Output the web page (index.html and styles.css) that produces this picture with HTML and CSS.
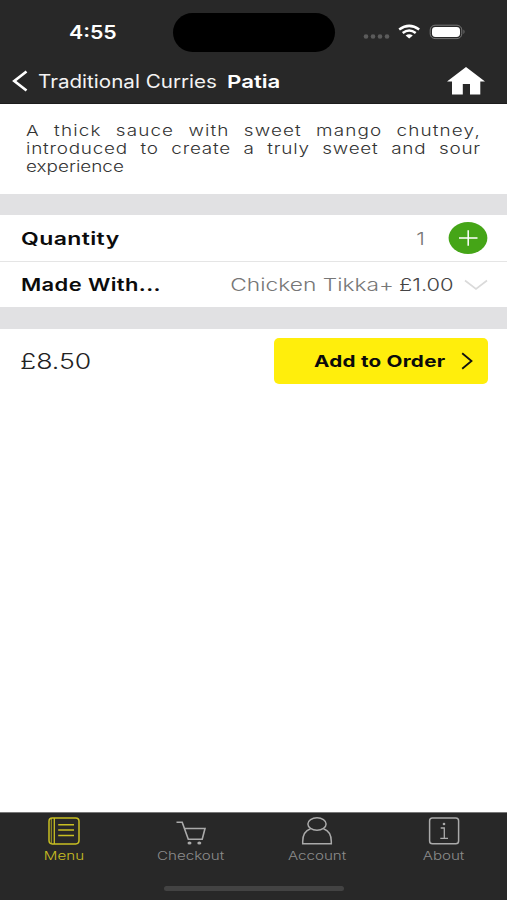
FILE: index.html
```
<!DOCTYPE html>
<html lang="en">
<head>
<meta charset="utf-8">
<title>Patia</title>
<link rel="stylesheet" href="styles.css">
</head>
<body>
<div class="app">
  <header class="top">
    <div class="status">
      <span class="wide time">4:55</span>
      <div class="island"></div>
      <svg class="signal" viewBox="0 0 104 20" width="104" height="20">
        <g fill="#5b5b5b"><circle cx="3" cy="14.5" r="2.3"/><circle cx="10" cy="14.5" r="2.3"/><circle cx="17" cy="14.5" r="2.3"/><circle cx="24" cy="14.5" r="2.3"/></g>
        <g fill="none" stroke="#fff" stroke-width="2.5"><path d="M36.2 7.6Q46.2 .2 56.2 7.6"/><path d="M39.7 11Q46.2 6 52.7 11"/></g>
        <path d="M42.6 13.6Q46.2 10.8 49.8 13.6L46.2 16.5Z" fill="#fff"/>
        <rect x="67.2" y="3.2" width="31.6" height="13.4" rx="4.8" fill="none" stroke="#777"/>
        <rect x="69" y="4.9" width="28" height="10" rx="3.4" fill="#fff"/>
        <path d="M100.5 7.6q2 2.2 0 4.6z" fill="#777"/>
      </svg>
    </div>
    <nav class="titlebar">
      <svg class="back" viewBox="0 0 16 22" width="16" height="22"><path d="M14.5 1.5L2.3 11L14.5 20.5" fill="none" stroke="#fff" stroke-width="2.7"/></svg>
      <span class="wide category">Traditional Curries</span>
      <span class="wide dish">Patia</span>
      <svg class="home" viewBox="0 0 38 28" width="38" height="28"><path d="M19 0L38 14.5H33.3V27.5H23V17H15.8V27.5H5V14.5H0Z" fill="#fff"/></svg>
    </nav>
  </header>
  <main>
    <section class="description">
      <p class="wide copy">
        <span class="line loose">A thick sauce with sweet mango chutney,</span>
        <span class="line spaced">introduced to create a truly sweet and sour</span>
        <span class="line last">experience</span>
      </p>
    </section>
    <section class="options">
      <div class="row">
        <span class="wide label quantity">Quantity</span>
        <span class="wide value count">1</span>
        <svg class="plus" viewBox="0 0 40 32" width="40" height="32"><ellipse cx="20" cy="16" rx="19.4" ry="15.9" fill="#45a517"/><path d="M11 16H29.5M20.2 8.2V23.8" stroke="#fff" stroke-width="1.5"/></svg>
      </div>
      <div class="row">
        <span class="wide label made">Made With...</span>
        <span class="wide value choice">Chicken Tikka+</span>
        <span class="wide value extra">£1.00</span>
        <svg class="down" viewBox="0 0 24 12" width="24" height="12"><path d="M1 1.5L12 10L23 1.5" fill="none" stroke="#dadada" stroke-width="1.6"/></svg>
      </div>
    </section>
    <section class="order">
      <span class="wide price">£8.50</span>
      <button class="add"><span class="wide add-text">Add to Order</span><svg viewBox="0 0 12 18" width="12" height="18"><path d="M1.2 1.2L10.5 9L1.2 16.8" fill="none" stroke="#111" stroke-width="1.8"/></svg></button>
    </section>
  </main>
  <footer>
    <nav class="tabs">
      <a class="tab active">
        <svg viewBox="0 0 32 28" width="32" height="28" fill="none" stroke="currentColor" stroke-width="1.5"><rect x="1" y=".9" width="30" height="26" rx="3.3"/><path d="M3.3 1.4V26.4" stroke-width=".8"/><path d="M6.3 1V27" stroke-width="1.3"/><path d="M10.2 7.8H26M10.2 13.1H26M10.2 18.5H26"/></svg>
        <span class="wide">Menu</span>
      </a>
      <a class="tab">
        <svg viewBox="0 0 32 28" width="32" height="28" fill="none" stroke="#aaa" stroke-width="1.6"><path d="M1.5 5.3H7.2L13.3 22.2H27.2L30 11.5H9.5"/><g fill="#aaa" stroke="none"><ellipse cx="14.5" cy="26" rx="2" ry="1.6"/><ellipse cx="24.3" cy="26" rx="2" ry="1.6"/></g></svg>
        <span class="wide">Checkout</span>
      </a>
      <a class="tab">
        <svg viewBox="0 0 32 28" width="32" height="28" fill="none" stroke="#aaa" stroke-width="1.5"><ellipse cx="16" cy="7" rx="9.1" ry="6.2"/><path d="M9.5 11.7C4 13.6 1.7 18.5 1.7 24.5V26.7H30.3V24.5C30.3 18.5 28 13.6 22.5 11.7"/></svg>
        <span class="wide">Account</span>
      </a>
      <a class="tab">
        <svg viewBox="0 0 32 28" width="32" height="28" fill="none" stroke="#aaa" stroke-width="1.5"><rect x="1.6" y="1" width="29" height="25.8" rx="2.8"/><path d="M12.7 11H16.3V21.4M12.3 21.4H20" stroke-width="1.3"/><circle cx="16" cy="7" r="1.3" fill="#aaa" stroke="none"/></svg>
        <span class="wide">About</span>
      </a>
    </nav>
    <div class="home-indicator"></div>
  </footer>
</div>
</body>
</html>
```
FILE: styles.css
```
* { box-sizing: border-box; }
body {
  margin: 0;
  font-family: "Inter", "Liberation Sans", sans-serif;
  background: #fff;
  color: #111;
}
.app { height: 900px; display: flex; flex-direction: column; }
svg { display: block; flex: none; }
.wide {
  display: block;
  white-space: nowrap;
  transform: scaleX(var(--stretch, 1.25));
  transform-origin: var(--from, left) center;
}

.top { height: 104px; background: #282828; color: #fff; border-bottom: 1px solid #1d1d1d; }
.status {
  height: 64px;
  padding: 0 40px 0 69px;
  display: grid;
  grid-template-columns: 104px 162px 1fr;
  align-items: center;
}
.time { --stretch: 1.15; font-size: 18.5px; font-weight: 600; }
.island { height: 39px; border-radius: 20px; background: #000; }
.signal { justify-self: end; }

.titlebar { height: 34px; padding: 0 22px 0 12px; display: flex; align-items: center; }
.category { --stretch: 1.145; width: 189px; margin-left: 10px; font-size: 18px; color: #f3f3f3; }
.dish { --stretch: 1.25; font-size: 17.8px; font-weight: 600; }
.home { margin-left: auto; }

.description { height: 90px; padding: 18px 26px 0; }
.copy {
  --stretch: 1.26;
  width: 361px;
  margin: 0;
  font-size: 15px;
  font-weight: 300;
  line-height: 18px;
  color: #333;
}
.line { display: block; text-align-last: justify; }
.loose { letter-spacing: .9px; }
.spaced { letter-spacing: .6px; }
.last { text-align-last: left; }

.options { border-top: 21px solid #e1e1e3; border-bottom: 22px solid #e1e1e3; }
.row { height: 46px; padding: 0 19px 0 21px; display: flex; align-items: center; }
.row + .row { border-top: 1px solid #e5e5e5; }
.label { margin-right: auto; font-size: 17.3px; font-weight: 600; letter-spacing: .3px; color: #0b0b0b; }
.quantity { --stretch: 1.33; }
.made { --stretch: 1.27; }
.value { --from: right; font-size: 17.5px; font-weight: 300; color: #777; }
.count { margin-right: 23px; }
.choice { --stretch: 1.3; margin-right: 16px; }
.extra { --stretch: 1.25; margin-right: 10px; color: #444; }

.order { height: 64px; padding: 0 19px 0 20px; display: flex; align-items: center; justify-content: space-between; }
.price { --stretch: 1.24; font-size: 21.5px; font-weight: 300; color: #222; }
.add {
  width: 214px;
  height: 46px;
  padding: 0 15px 0 40px;
  border: 0;
  border-radius: 5px;
  background: #ffee0c;
  color: #0b0b0b;
  display: flex;
  align-items: center;
  justify-content: space-between;
  font: inherit;
}
.add-text { --stretch: 1.29; font-size: 16px; font-weight: 700; letter-spacing: .2px; }

footer { margin-top: auto; height: 88px; background: #282828; border-top: 1px solid #777; }
.tabs { display: grid; grid-template-columns: repeat(4, 1fr); padding: 4px 0 0 1px; }
.tab {
  --from: center;
  --stretch: 1.26;
  display: flex;
  flex-direction: column;
  align-items: center;
  gap: 3px;
  font-size: 12px;
  font-weight: 300;
  line-height: 16px;
  color: #8c8c8c;
}
.active { color: #c8bf22; }
.home-indicator { width: 180px; height: 5px; margin: 22px auto 0; border-radius: 3px; background: #434343; }
```
